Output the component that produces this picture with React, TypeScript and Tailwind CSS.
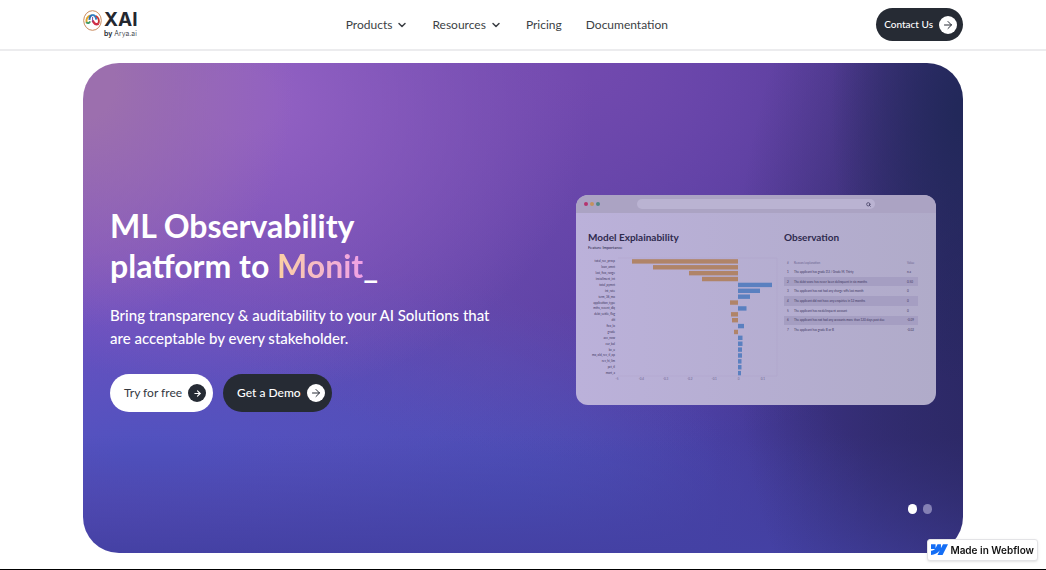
import { ArrowRight, ChevronDown, Search } from 'lucide-react';

const navLinks = [
  { label: 'Products', menu: true },
  { label: 'Resources', menu: true },
  { label: 'Pricing', menu: false },
  { label: 'Documentation', menu: false },
];

// from / to are x positions inside the chart, zero line is at 150
const features = [
  { name: 'total_rec_prncp', from: 44, to: 150 },
  { name: 'loan_amnt', from: 65, to: 150 },
  { name: 'last_fico_range', from: 101, to: 150 },
  { name: 'installment_int', from: 114, to: 150 },
  { name: 'total_pymnt', from: 150, to: 184 },
  { name: 'int_rate', from: 150, to: 172 },
  { name: 'term_36_mo', from: 150, to: 162 },
  { name: 'application_type', from: 142, to: 150 },
  { name: 'mths_recent_dlq', from: 150, to: 158.5 },
  { name: 'debt_settle_flag', from: 143, to: 150 },
  { name: 'dti', from: 144, to: 150 },
  { name: 'fico_lo', from: 150, to: 156 },
  { name: 'grade', from: 146, to: 150 },
  { name: 'acc_now', from: 150, to: 154.5 },
  { name: 'cur_bal', from: 150, to: 154.5 },
  { name: 'bc_u', from: 150, to: 154 },
  { name: 'mo_old_rev_tl_op', from: 150, to: 154 },
  { name: 'rev_hi_lim', from: 150, to: 153.5 },
  { name: 'pct_tl', from: 150, to: 153.5 },
  { name: 'mort_a', from: 150, to: 153 },
];

const ticks = ['-5', '-0.4', '-0.3', '-0.2', '-0.1', '0', '0.1'];

const observations = [
  { id: '1', text: 'The applicant has grade D2 / Grade M, Thirty', value: 'n.a' },
  { id: '2', text: 'The debt score has never been delinquent in six months', value: '0.50' },
  { id: '3', text: 'The applicant has not had any charge-offs last month', value: '0' },
  { id: '4', text: 'The applicant did not have any enquiries in 12 months', value: '0' },
  { id: '5', text: 'The applicant has no delinquent account', value: '0' },
  { id: '6', text: 'The applicant has not had any accounts more than 120 days past due', value: '-0.09' },
  { id: '7', text: 'The applicant has grade B or B', value: '-0.02' },
];

const Logo = () => (
  <a href="/" className="flex gap-[2px]">
    <svg className="h-[21px] w-[19px]" viewBox="0 0 19 21" fill="none">
      <ellipse cx="9.5" cy="10.5" rx="8.8" ry="9.8" stroke="#c98a5c" strokeWidth="1" />
      <path d="M3.6 12.6C2.8 9 4.6 6 7.6 5.4" stroke="#e0a52c" strokeWidth="2" />
      <path d="M3.2 12.2c1.6 1.4 3.2 1 4-.8" stroke="#3f9a62" strokeWidth="1.8" />
      <path d="M6.4 9.8c.2-2.6 1.4-4.6 3.4-4.8" stroke="#2c6fb4" strokeWidth="2" />
      <path d="M9.6 5c2 .2 3.4 1.8 3.6 4.6" stroke="#2f83c5" strokeWidth="2" />
      <path d="M12.8 6c2.6 1.4 3.6 4.2 2.8 7.6" stroke="#c8342f" strokeWidth="1.8" />
      <path d="M9.6 10.6c1.4 3.2 3.4 4.4 6 3" stroke="#cf2e46" strokeWidth="2.4" />
      <path d="M9.6 7v4.5" stroke="#7d4a9d" strokeWidth="1" />
    </svg>
    <div className="flex flex-col font-['Inter',sans-serif] text-[#23272f]">
      <span className="text-[19px] leading-[19px] font-bold">XAI</span>
      <span className="text-[7px] leading-[10px] font-light">
        <b className="font-semibold">by</b> Arya.ai
      </span>
    </div>
  </a>
);

const Header = () => (
  <header className="flex h-[51px] items-center justify-between border-b-2 border-[#ececee] bg-white px-[83px]">
    <Logo />
    <nav className="flex items-center gap-6 text-[12px] text-[#3c3f45]">
      {navLinks.map((link) => (
        <a key={link.label} href="#" className="flex items-center gap-1">
          {link.label}
          {link.menu && <ChevronDown size={12} strokeWidth={3} />}
        </a>
      ))}
    </nav>
    <button className="flex h-[33px] items-center gap-[6px] rounded-full bg-[#262b34] pr-[6px] pl-2 text-[10px] font-medium text-white">
      Contact Us
      <span className="flex size-[18px] items-center justify-center rounded-full bg-white text-[#262b34]">
        <ArrowRight size={12} />
      </span>
    </button>
  </header>
);

const Chart = () => (
  <svg className="w-full" viewBox="0 0 190 124" fontFamily="Lato, sans-serif">
    <path d="M30 1H189V119H30" fill="none" stroke="#a9a0c6" strokeWidth="0.3" />
    {features.map((f, i) => (
      <g key={f.name}>
        <text x="27" y={5.4 + i * 5.88} fontSize="3" textAnchor="end" fill="#3d3660">
          {f.name}
        </text>
        <rect
          x={f.from}
          y={2.2 + i * 5.88}
          width={f.to - f.from}
          height="4.4"
          fill={f.to === 150 ? '#b08468' : '#5a80c0'}
        />
      </g>
    ))}
    {ticks.map((t, i) => (
      <text key={t} x={29 + i * 24.3} y="123" fontSize="3" textAnchor="middle" fill="#6d6590">
        {t}
      </text>
    ))}
  </svg>
);

const Mockup = () => (
  <div className="w-[360px] overflow-hidden rounded-[12px] bg-linear-to-r from-[#bbb1da] to-[#b0abc9] text-[#2f2a4e]">
    <div className="flex h-[18px] items-center bg-[#aba3c3] px-2">
      <div className="flex w-[53px] gap-[2px]">
        <span className="size-1 rounded-full bg-[#b5346f]" />
        <span className="size-1 rounded-full bg-[#c4925f]" />
        <span className="size-1 rounded-full bg-[#4f8585]" />
      </div>
      <div className="flex h-[10px] w-[238px] items-center justify-end rounded-full bg-[#bab3d2] px-1">
        <Search size={5} strokeWidth={3} />
      </div>
    </div>
    <div className="flex h-[192px] justify-between pt-[18px] pr-[18px] pl-3">
      <div className="w-[190px]">
        <h2 className="text-[10px] leading-[12px] font-bold">Model Explainability</h2>
        <p className="mb-1 text-[4px] leading-[10px] font-medium">Feature Importance</p>
        <Chart />
      </div>
      <div className="w-[134px]">
        <h2 className="mb-4 text-[10px] leading-[12px] font-bold">Observation</h2>
        <table className="h-[76px] w-full table-fixed text-left text-[3px] leading-[8px] text-[#3d3660]">
          <thead>
            <tr className="text-[#6d6590]">
              <th className="w-[10px] pl-[3px] font-normal">#</th>
              <th className="font-normal">Reason/explanation</th>
              <th className="w-[11px] font-normal">Value</th>
            </tr>
          </thead>
          <tbody>
            {observations.map((row) => (
              <tr key={row.id} className="even:bg-[#a59ec2]">
                <td className="pl-[3px]">{row.id}</td>
                <td className="whitespace-nowrap">{row.text}</td>
                <td>{row.value}</td>
              </tr>
            ))}
          </tbody>
        </table>
      </div>
    </div>
  </div>
);

const Hero = () => (
  <section className="relative flex min-h-[490px] items-center justify-between rounded-[36px] bg-[#453a9a] bg-[radial-gradient(ellipse_15%_55%_at_100%_10%,#22285a_5%,#22285a00_100%),radial-gradient(ellipse_32%_100%_at_106%_50%,#2b2864_10%,#2b286400_100%),linear-gradient(0deg,#4441a4_0%,#4441a400_24%),radial-gradient(ellipse_24%_50%_at_0%_4%,#9c6fae_15%,#9c6fae00_100%),radial-gradient(ellipse_40%_60%_at_18%_8%,#9160c2_10%,#9160c200_100%),radial-gradient(ellipse_60%_80%_at_56%_0%,#7149ae_5%,#7149ae00_100%),radial-gradient(ellipse_65%_42%_at_8%_80%,#5152bf_5%,#5152bf00_100%),radial-gradient(ellipse_42%_40%_at_48%_90%,#484db4_5%,#484db400_100%),linear-gradient(90deg,#7850c0_0%,#5d46a8_45%,#49389a_70%,#332d72_100%)] px-[27px]">
    <div className="pt-[2px] text-white">
      <h1 className="text-[32px] leading-[40px] font-bold">
        ML Observability
        <br />
        platform to{' '}
        <span className="bg-linear-to-r from-[#fbd0a2] to-[#f0a0e6] bg-clip-text text-transparent">
          Monit
        </span>
        _
      </h1>
      <p className="mt-[18px] max-w-[390px] text-[15px] leading-[23px] font-medium">
        Bring transparency &amp; auditability to your AI Solutions that are acceptable by every
        stakeholder.
      </p>
      <div className="mt-6 flex gap-[10px] text-[12px]">
        <button className="flex h-[38px] items-center gap-[6px] rounded-full bg-white pr-[7px] pl-[14px] text-[#34383f]">
          Try for free
          <span className="flex size-[18px] items-center justify-center rounded-full bg-[#262b34] text-white">
            <ArrowRight size={9} strokeWidth={3} />
          </span>
        </button>
        <button className="flex h-[38px] items-center gap-[6px] rounded-full bg-[#262b34] pr-[7px] pl-[14px] font-medium">
          Get a Demo
          <span className="flex size-[18px] items-center justify-center rounded-full bg-white text-[#262b34]">
            <ArrowRight size={12} />
          </span>
        </button>
      </div>
    </div>
    <div className="pb-4">
      <Mockup />
    </div>
    <div className="absolute right-[31px] bottom-[39px] flex gap-[6px]">
      <button aria-label="Slide 1" className="h-[10px] w-[9px] rounded-full bg-white" />
      <button aria-label="Slide 2" className="h-[10px] w-[9px] rounded-full bg-[#8480b4]" />
    </div>
  </section>
);

const WebflowBadge = () => (
  <a
    href="#"
    className="fixed right-2 bottom-[9px] flex h-[22px] items-center gap-[2px] rounded-[3px] border border-[#e3e3e6] bg-white px-[3px] font-['Inter',sans-serif] text-[10px] font-semibold text-[#111111] shadow-sm"
  >
    <svg className="w-[17px]" viewBox="0 4 24 16" fill="#146ef5">
      <path d="m24 4.515-7.658 14.97H9.149l3.205-6.204h-.144C9.566 16.713 5.621 18.973 0 19.485v-6.118s3.596-.213 5.71-2.435H0V4.515h6.417v5.278l.144-.001 2.622-5.277h4.854v5.244h.144l2.72-5.244H24Z" />
    </svg>
    Made in Webflow
  </a>
);

const App = () => {
  return (
    <div className="bg-white font-['Lato',sans-serif]">
      <Header />
      <main className="px-[83px] pt-3 pb-4">
        <Hero />
      </main>
      <div className="h-px bg-black" />
      <WebflowBadge />
    </div>
  );
};

export default App;
